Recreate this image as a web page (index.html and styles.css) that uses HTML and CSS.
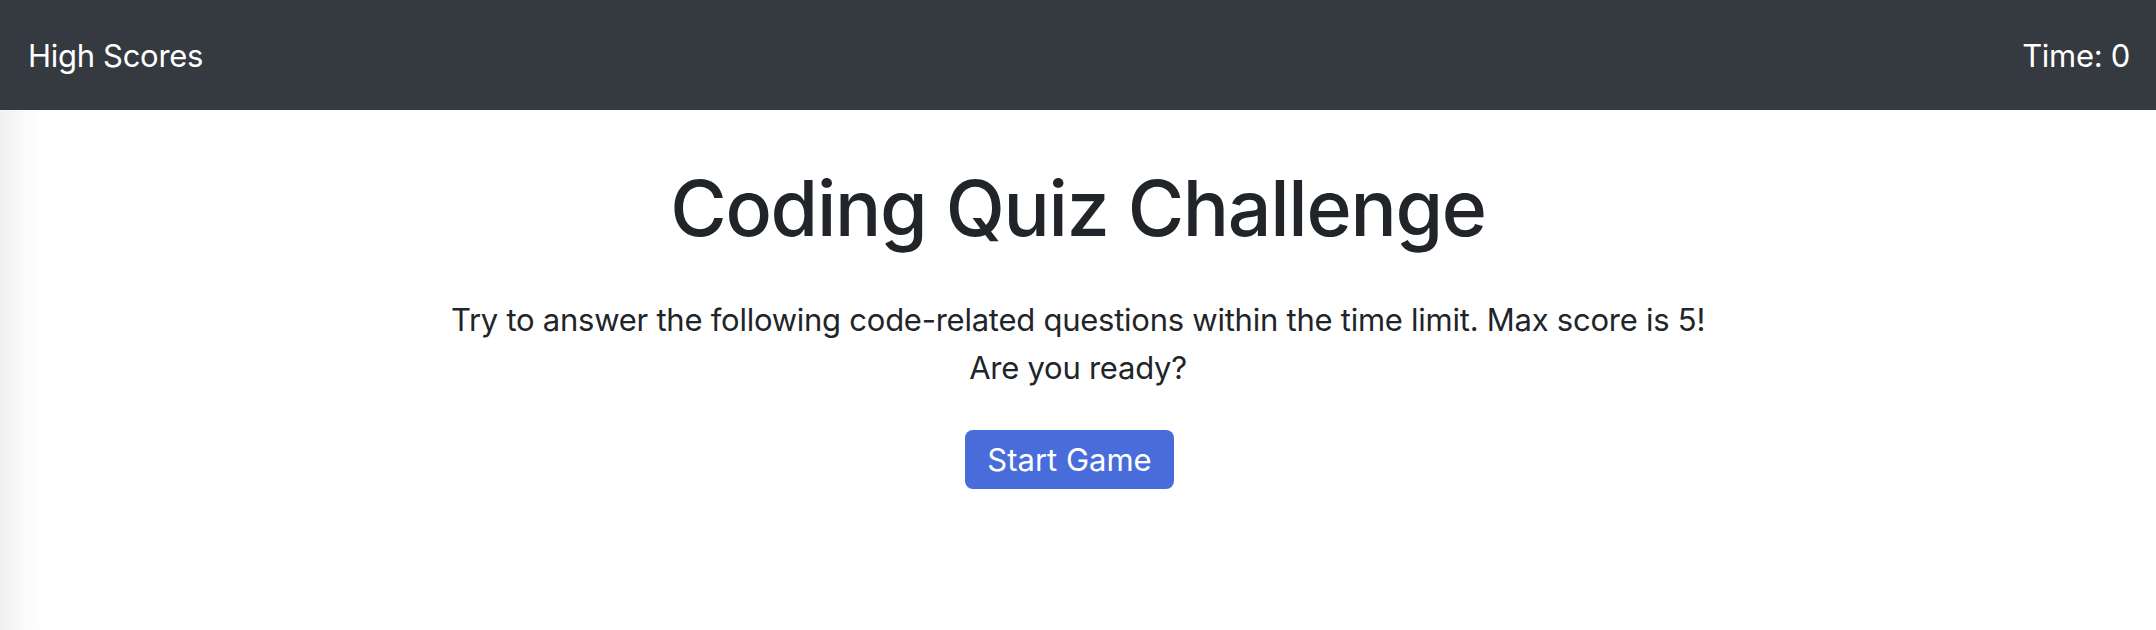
FILE: index.html
```html
<!DOCTYPE html>
<html lang="en">
<head>
<meta charset="utf-8">
<title>Coding Quiz Challenge</title>
<link rel="stylesheet" href="styles.css">
</head>
<body>
<nav class="navbar">
  <a class="nav-link" href="#">High Scores</a>
  <span class="timer">Time: 0</span>
</nav>
<main class="intro">
  <h1 class="title">Coding Quiz Challenge</h1>
  <p class="lead">Try to answer the following code-related questions within the time limit. Max score is 5!<br>Are you ready?</p>
  <button class="btn-start" type="button">Start Game</button>
</main>
</body>
</html>
```

FILE: styles.css
```css
html, body {
  margin: 0;
  padding: 0;
  height: 100%;
}
body {
  font-family: Inter, "Noto Sans", sans-serif;
  color: #212529;
  background: linear-gradient(to right, #f1f1f1 0px, #fafafa 24px, #ffffff 48px);
}
.navbar {
  height: 110px;
  background: #343a40;
  display: flex;
  align-items: center;
  justify-content: space-between;
  padding: 0 26px 0 28px;
  font-size: 31px;
  letter-spacing: -0.3px;
}
.nav-link {
  color: #ffffff;
  text-decoration: none;
}
.timer {
  color: #ffffff;
}
.intro {
  display: flex;
  flex-direction: column;
  align-items: center;
  text-align: center;
  padding-top: 50px;
}
.title {
  margin: 0;
  font-size: 77px;
  line-height: 96px;
  font-weight: 500;
  letter-spacing: -1.3px;
}
.lead {
  margin: 40px 0 0;
  font-size: 31px;
  line-height: 48px;
  letter-spacing: -0.25px;
}
.btn-start {
  margin: 38px 17px 0 0;
  font-family: inherit;
  font-size: 31px;
  line-height: 45px;
  padding: 7px 22px;
  color: #ffffff;
  background: #486ddb;
  border: none;
  border-radius: 8px;
}
```
